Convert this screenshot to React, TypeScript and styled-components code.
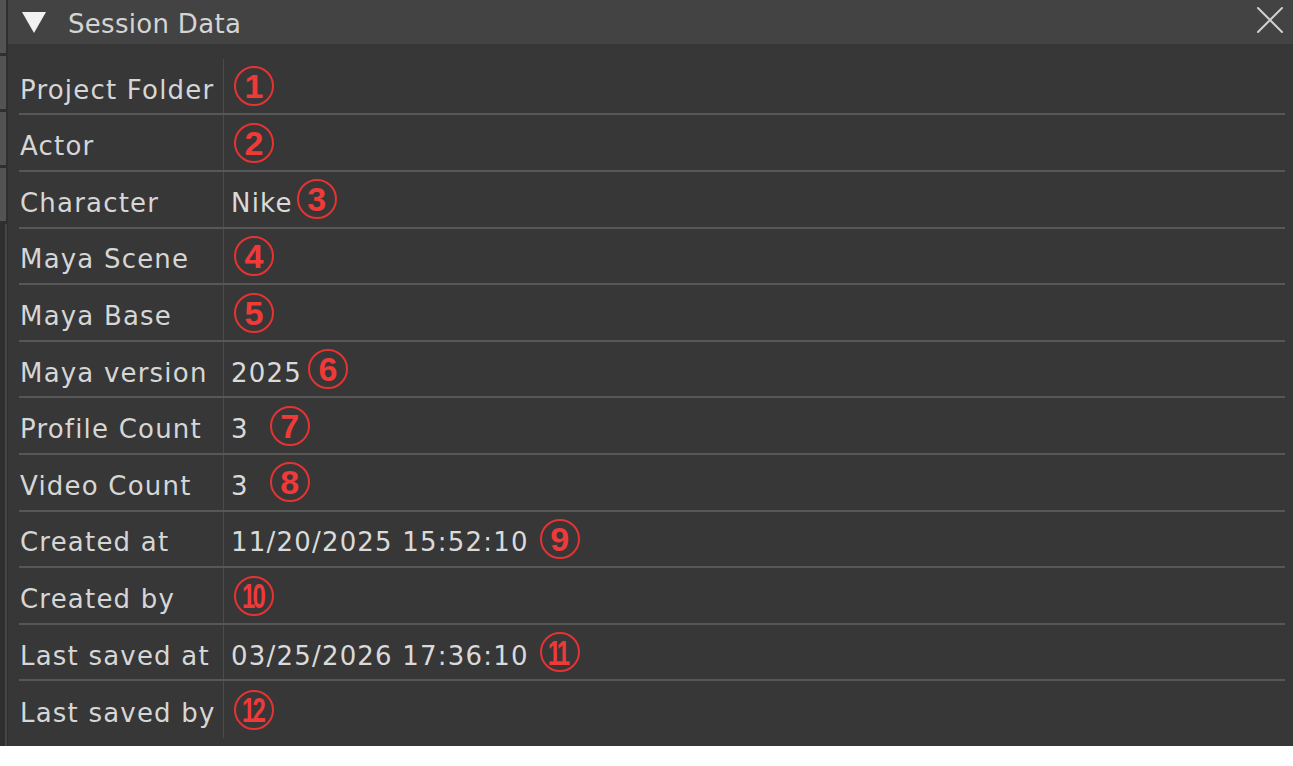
import React from "react";
import styled, { createGlobalStyle } from "styled-components";

const GlobalStyle = createGlobalStyle`
  html, body {
    margin: 0;
    padding: 0;
    background: #ffffff;
  }
  body {
    font-family: "DejaVu Sans", "Liberation Sans", sans-serif;
  }
`;

const Window = styled.div`
  display: flex;
  height: 746px;
  width: 100%;
`;

const Rail = styled.div`
  display: flex;
  flex-direction: column;
  width: 8px;
  background: #2f2f2f;
`;

const Stub = styled.div`
  height: 53px;
  width: 6px;
  margin-bottom: 3px;
  background: #535353;
`;

const Track = styled.div`
  flex: 1;
  width: 2px;
  margin-left: 5px;
  background: #474747;
`;

const Panel = styled.div`
  flex: 1;
  display: flex;
  flex-direction: column;
  background: #373737;
`;

const Header = styled.div`
  display: flex;
  align-items: center;
  height: 44px;
  padding: 0 9px 0 14px;
  background: #434343;
  color: #d4d4d4;
`;

const Caret = styled.svg`
  width: 24px;
  height: 22px;
  margin-right: 22px;
  margin-top: 2px;
`;

const Title = styled.span`
  flex: 1;
  padding-top: 4px;
  font-size: 26px;
  letter-spacing: 0.3px;
`;

const Close = styled.svg`
  width: 28px;
  height: 28px;
  margin-top: -4px;
`;

const Body = styled.div`
  flex: 1;
  padding: 15px 8px 8px 11px;
`;

const Row = styled.div<{ $last?: boolean }>`
  display: flex;
  align-items: center;
  box-sizing: border-box;
  height: 56.6px;
  border-bottom: ${(p) => (p.$last ? "none" : "2px solid #575757")};
`;

const Label = styled.div`
  box-sizing: border-box;
  width: 204px;
  height: 100%;
  display: flex;
  align-items: center;
  padding: 7px 0 0 1px;
  font-size: 26px;
  letter-spacing: 1.2px;
  color: #d6d6d6;
  white-space: nowrap;
`;

const Value = styled.div`
  flex: 1;
  height: 100%;
  display: flex;
  align-items: center;
  padding-left: 7px;
  border-left: 1.5px solid #4b4b4b;
`;

const Text = styled.span`
  padding-top: 7px;
  font-size: 26px;
  letter-spacing: 1.2px;
  color: #dadada;
  white-space: nowrap;
`;

const Badge = styled.span<{ $gap: number }>`
  box-sizing: border-box;
  display: inline-flex;
  align-items: center;
  justify-content: center;
  width: 40px;
  height: 40px;
  margin-left: ${(p) => p.$gap}px;
  border: 2px solid #e53333;
  border-radius: 50%;
  overflow: hidden;
`;

const Digits = styled.span<{ $narrow?: boolean }>`
  font-family: "Liberation Sans", Arial, sans-serif;
  font-weight: 700;
  font-size: ${(p) => (p.$narrow ? 35 : 34)}px;
  line-height: 1;
  color: #f03a3a;
  letter-spacing: ${(p) => (p.$narrow ? "-4px" : "0")};
  transform: ${(p) => (p.$narrow ? "scaleX(0.68)" : "none")};
  margin-left: ${(p) => (p.$narrow ? "-4px" : "0")};
`;

type Field = {
  label: string;
  value?: string;
  gap: number;
};

const fields: Field[] = [
  { label: "Project Folder", gap: 3 },
  { label: "Actor", gap: 3 },
  { label: "Character", value: "Nike", gap: 4 },
  { label: "Maya Scene", gap: 3 },
  { label: "Maya Base", gap: 3 },
  { label: "Maya version", value: "2025", gap: 6 },
  { label: "Profile Count", value: "3", gap: 21 },
  { label: "Video Count", value: "3", gap: 21 },
  { label: "Created at", value: "11/20/2025 15:52:10", gap: 11 },
  { label: "Created by", gap: 3 },
  { label: "Last saved at", value: "03/25/2026 17:36:10", gap: 11 },
  { label: "Last saved by", gap: 3 },
];

const App = () => {
  return (
    <>
      <GlobalStyle />
      <Window>
        <Rail>
          <Stub />
          <Stub />
          <Stub />
          <Stub />
          <Track />
        </Rail>
        <Panel>
          <Header>
            <Caret viewBox="0 0 24 22">
              <polygon points="0,0 24,0 12,21" fill="#f2f2f2" />
            </Caret>
            <Title>Session Data</Title>
            <Close viewBox="0 0 28 28">
              <path
                d="M2 2 L26 26 M26 2 L2 26"
                stroke="#cfcfcf"
                strokeWidth="2"
                strokeLinecap="round"
              />
            </Close>
          </Header>
          <Body>
            {fields.map((f, i) => (
              <Row key={f.label} $last={i === fields.length - 1}>
                <Label>{f.label}</Label>
                <Value>
                  {f.value && <Text>{f.value}</Text>}
                  <Badge $gap={f.value ? f.gap : 3}>
                    <Digits $narrow={i + 1 > 9}>{i + 1}</Digits>
                  </Badge>
                </Value>
              </Row>
            ))}
          </Body>
        </Panel>
      </Window>
    </>
  );
};

export default App;
